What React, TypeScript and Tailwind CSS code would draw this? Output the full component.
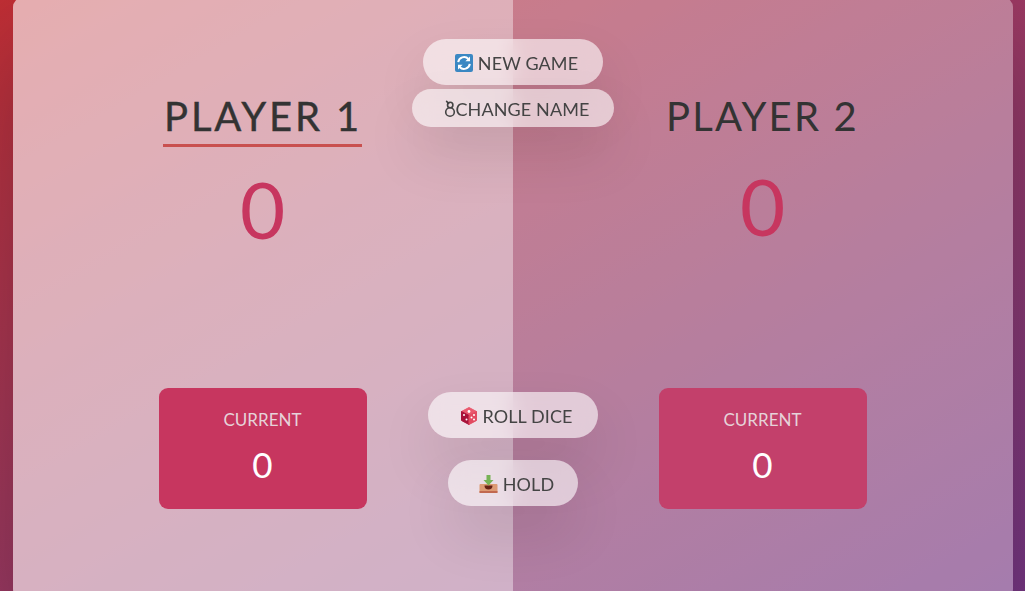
import React from 'react';

const font = { fontFamily: '"Lato", "Noto Sans", sans-serif' };

const RefreshIcon = () => (
  <svg width="18" height="18" viewBox="0 0 18 18" className="shrink-0">
    <rect x="0" y="0" width="18" height="18" rx="2" fill="#3b88c3" />
    <path d="M3.2 8.2A5.9 5.9 0 0 1 13.4 5" fill="none" stroke="#fff" strokeWidth="2" />
    <path d="M15 2.6v4.6h-4.6z" fill="#fff" />
    <path d="M14.8 9.8A5.9 5.9 0 0 1 4.6 13" fill="none" stroke="#fff" strokeWidth="2" />
    <path d="M3 15.4v-4.6h4.6z" fill="#fff" />
  </svg>
);

const PersonIcon = () => (
  <svg width="12" height="18" viewBox="0 0 12 18" className="shrink-0">
    <path d="M2.6 1.4 4.6 3.4" fill="none" stroke="#444" strokeWidth="1.6" strokeLinecap="round" />
    <circle cx="6.2" cy="5" r="2.7" fill="none" stroke="#444" strokeWidth="1.6" />
    <circle cx="6" cy="12" r="4.3" fill="none" stroke="#444" strokeWidth="1.6" />
  </svg>
);

const DiceIcon = () => (
  <svg width="16" height="18" viewBox="0 0 16 18" className="shrink-0">
    <path d="M8 0.5 15.5 4.5 8 8.5 0.5 4.5z" fill="#ea596e" stroke="#ea596e" strokeLinejoin="round" />
    <path d="M0.5 4.5 8 8.5V17.5L0.5 13.5z" fill="#a8123a" stroke="#a8123a" strokeLinejoin="round" />
    <path d="M15.5 4.5 8 8.5V17.5L15.5 13.5z" fill="#e24a60" stroke="#e24a60" strokeLinejoin="round" />
    <circle cx="8" cy="4.5" r="1.4" fill="#fff" />
    <circle cx="3" cy="8" r="1" fill="#fff" />
    <circle cx="5.5" cy="12.5" r="1" fill="#fff" />
    <circle cx="13" cy="8" r="1" fill="#fff" />
    <circle cx="10.5" cy="10.5" r="1" fill="#fff" />
    <circle cx="13" cy="12.5" r="1" fill="#fff" />
  </svg>
);

const InboxIcon = () => (
  <svg width="19" height="18" viewBox="0 0 19 18" className="shrink-0">
    <rect x="0.5" y="9" width="18" height="9" rx="1" fill="#dd9a73" />
    <rect x="0.5" y="16" width="18" height="2" rx="0.5" fill="#c1694f" />
    <path d="M5.5 10.5h8a4 4 0 0 1-8 0z" fill="#662113" />
    <path d="M7.5 0h4v5h3l-5 5.5-5-5.5h3z" fill="#77b255" />
  </svg>
);

const Player = ({ name, score, active }: { name: string; score: number; active?: boolean }) => (
  <section className={`flex flex-col items-center pt-[93px] ${active ? 'bg-white/40' : ''}`}>
    <h2
      className={`text-[40px] leading-[50px] text-[#333] ${
        active
          ? 'tracking-[2.8px] pb-[3px] mb-[18px] pl-[1px] border-b-[3px] border-[#c9504f] [-webkit-text-stroke:0.4px_#333]'
          : 'tracking-[2.2px] mb-[21px]'
      }`}
    >
      {name}
    </h2>
    <p className="text-[78px] leading-[88px] font-normal text-[#c7365f]">{score}</p>
    <div
      className={`mt-auto mb-[89px] w-[208px] h-[121px] rounded-[9px] flex flex-col items-center pt-[20px] ${
        active ? 'bg-[#c7365f]' : 'bg-[#c3406b]'
      }`}
    >
      <p className="text-[17px] leading-[24px] text-[#e6d3d9] font-normal">CURRENT</p>
      <p className="text-[35px] leading-[44px] mt-[10px] text-white">0</p>
    </div>
  </section>
);

const Pill = ({ className, children }: { className: string; children: React.ReactNode }) => (
  <button
    className={`absolute left-1/2 -translate-x-1/2 flex items-center justify-center rounded-full bg-white/60 pt-[2px] text-[18px] text-[#444] tracking-[0.1px] shadow-[0_28px_56px_rgba(0,0,0,0.1)] backdrop-blur-[10px] ${className}`}
  >
    {children}
  </button>
);

export default function App() {
  return (
    <div
      className="h-[591px] w-full overflow-hidden flex items-start justify-center bg-gradient-to-tl from-[#753682] to-[#bf2e34]"
      style={font}
    >
      <main className="relative -mt-[2px] w-[1000px] h-[600px] shrink-0 grid grid-cols-2 overflow-hidden rounded-[9px] bg-white/35 shadow-[0_48px_96px_rgba(0,0,0,0.25)]">
        <Player name="PLAYER 1" score={0} active />
        <Player name="PLAYER 2" score={0} />
        <Pill className="top-[41px] w-[180px] h-[46px] gap-[5px] pl-[8px]">
          <RefreshIcon /> NEW GAME
        </Pill>
        <Pill className="top-[91px] w-[202px] h-[38px] pl-[8px]">
          <PersonIcon /> CHANGE NAME
        </Pill>
        <Pill className="top-[394px] w-[170px] h-[46px] gap-[5px] pl-[9px]">
          <DiceIcon /> ROLL DICE
        </Pill>
        <Pill className="top-[462px] w-[130px] h-[46px] gap-[5px] pl-[8px]">
          <InboxIcon /> HOLD
        </Pill>
      </main>
    </div>
  );
}
